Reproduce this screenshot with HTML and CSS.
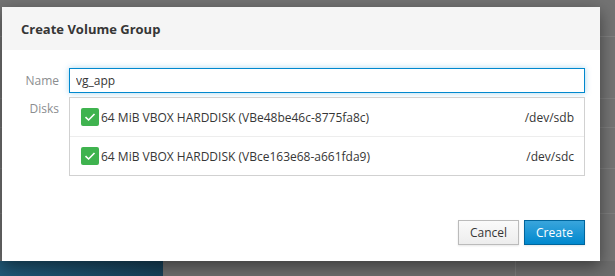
FILE: index.html
```html
<!DOCTYPE html>
<html lang="en">
<head>
    <meta charset="UTF-8">
    <meta name="viewport" content="width=device-width, initial-scale=1.0">
    <title>Create Volume Group</title>
    <link rel="stylesheet" href="styles.css">
</head>
<body>
    <div class="modal">
        <div class="modal-header">
            <h4>Create Volume Group</h4>
        </div>

        <div class="modal-body">
            <div class="form-row">
                <label class="form-label" for="vg-name">Name</label>
                <input id="vg-name" class="form-input" type="text" value="vg_app">
            </div>

            <div class="form-row">
                <span class="form-label disks-label">Disks</span>
                <ul class="disk-list">
                    <li class="disk">
                        <span class="check">
                            <svg width="12" height="10" viewBox="0 0 12 10"><path d="M1.5 5.2 L4.6 8 L10.5 2" fill="none" stroke="#fff" stroke-width="1.6"/></svg>
                        </span>
                        <span class="disk-name">64 MiB VBOX HARDDISK (VBe48be46c-8775fa8c)</span>
                        <span class="disk-dev">/dev/sdb</span>
                    </li>
                    <li class="disk">
                        <span class="check">
                            <svg width="12" height="10" viewBox="0 0 12 10"><path d="M1.5 5.2 L4.6 8 L10.5 2" fill="none" stroke="#fff" stroke-width="1.6"/></svg>
                        </span>
                        <span class="disk-name">64 MiB VBOX HARDDISK (VBce163e68-a661fda9)</span>
                        <span class="disk-dev">/dev/sdc</span>
                    </li>
                </ul>
            </div>
        </div>

        <div class="modal-footer">
            <button class="btn">Cancel</button>
            <button class="btn btn-primary">Create</button>
        </div>
    </div>

    <div class="page-bottom">
        <div class="nav-strip"></div>
        <div class="content-strip"></div>
    </div>
</body>
</html>
```

FILE: styles.css
```css
body {
    margin: 0;
    height: 276px;
    overflow: hidden;
    font-family: "Open Sans", "Noto Sans", sans-serif;
    font-size: 12px;
    color: #363636;
    background-color: #737373;
    background-image:
        linear-gradient(to bottom, transparent 36px, #808080 36px, #808080 37px, transparent 37px),
        linear-gradient(to bottom, transparent 98px, #7e7e7e 98px, #7e7e7e 99px, transparent 99px),
        linear-gradient(to bottom, transparent 127px, #7e7e7e 127px, #7e7e7e 128px, transparent 128px),
        linear-gradient(to bottom, transparent 168px, #7e7e7e 168px, #7e7e7e 169px, transparent 169px),
        linear-gradient(to bottom, transparent 213px, #7e7e7e 213px, #7e7e7e 214px, transparent 214px);
}

.modal {
    margin: 7px 0 0 2px;
    width: 598px;
    height: 254px;
    background: #fff;
    box-shadow: 0 5px 15px rgba(0, 0, 0, 0.45);
    display: flex;
    flex-direction: column;
    position: relative;
    z-index: 1;
}

.modal-header {
    height: 43px;
    background: #f5f5f5;
    display: flex;
    align-items: center;
    padding-left: 19px;
}

.modal-header h4 {
    margin: 0;
    font-size: 13px;
    font-weight: 700;
    color: #363636;
}

.modal-body {
    padding: 18px 15px 0 0;
    flex: 1;
}

.form-row {
    display: flex;
    align-items: center;
    margin-bottom: 4px;
}

.form-label {
    width: 57px;
    margin-right: 10px;
    text-align: right;
    color: #8b8d8f;
    flex-shrink: 0;
}

.disks-label {
    align-self: flex-start;
    margin-top: 3px;
}

.form-input {
    flex: 1;
    height: 25px;
    box-sizing: border-box;
    border: 1px solid #0088ce;
    padding: 2px 6px;
    font-family: inherit;
    font-size: 12px;
    color: #363636;
    outline: none;
    box-shadow: 0 0 6px rgba(0, 136, 206, 0.35);
}

.disk-list {
    flex: 1;
    list-style: none;
    margin: 0;
    padding: 0;
    border: 1px solid #d1d1d1;
}

.disk {
    display: flex;
    align-items: center;
    height: 38px;
    padding: 0 10px 0 11px;
}

.disk + .disk {
    border-top: 1px solid #ededed;
}

.check {
    width: 18px;
    height: 18px;
    border-radius: 2px;
    background: #3fb34f;
    display: flex;
    align-items: center;
    justify-content: center;
    margin-right: 2px;
}

.disk-name {
    flex: 1;
}

.modal-footer {
    display: flex;
    justify-content: flex-end;
    gap: 5px;
    padding: 0 15px 16px 0;
}

.btn {
    width: 61px;
    height: 25px;
    font-family: inherit;
    font-size: 12px;
    color: #363636;
    border: 1px solid #bbb;
    background: linear-gradient(to bottom, #fafafa, #ededed);
    box-shadow: 0 1px 2px rgba(0, 0, 0, 0.1);
    padding: 0;
}

.btn-primary {
    color: #fff;
    border-color: #00659c;
    background: linear-gradient(to bottom, #39a5dc, #0088ce);
}

.page-bottom {
    display: flex;
    height: 15px;
}

.nav-strip {
    width: 163px;
    background: linear-gradient(to right, #1f5776, #173f57);
}

.content-strip {
    flex: 1;
    background: #6c6c6c;
    background-image: linear-gradient(to right, transparent 352px, #7a7a7a 352px, #7a7a7a 353px, transparent 353px);
}
```
